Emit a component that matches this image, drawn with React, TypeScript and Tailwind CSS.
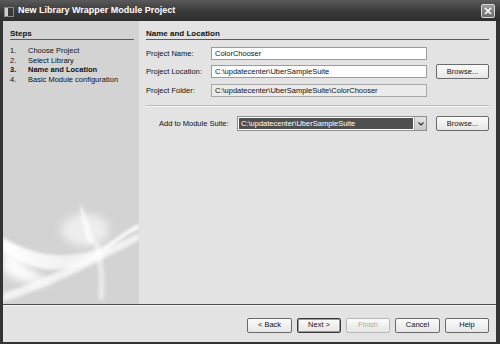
import React from 'react';

const steps = [
  { n: '1.', label: 'Choose Project' },
  { n: '2.', label: 'Select Library' },
  { n: '3.', label: 'Name and Location', current: true },
  { n: '4.', label: 'Basic Module configuration' },
];

function Button({ label, width, primary, disabled }: { label: string; width: string; primary?: boolean; disabled?: boolean }) {
  let cls = 'border-[#6a6a6a] text-[#111]';
  if (primary) cls = 'border-[#3a3a3a] shadow-[inset_0_0_0_1px_#9a9a9a] text-[#111]';
  if (disabled) cls = 'border-[#b9b9b9] text-[#a8a8a8]';
  return (
    <div
      className={`${width} h-[15px] flex items-center justify-center rounded-[2px] border bg-gradient-to-b from-[#fbfbfb] to-[#e6e6e6] text-[7.5px] ${cls}`}
    >
      {label}
    </div>
  );
}

function Swoosh() {
  return (
    <svg width="136" height="110" viewBox="0 0 136 110" className="mt-auto block">
      <defs>
        <filter id="soft" x="-20%" y="-20%" width="140%" height="140%">
          <feGaussianBlur stdDeviation="1.4" />
        </filter>
        <filter id="softer" x="-30%" y="-30%" width="160%" height="160%">
          <feGaussianBlur stdDeviation="4" />
        </filter>
        <linearGradient id="band" x1="0" y1="0" x2="1" y2="0">
          <stop offset="0" stopColor="#ffffff" stopOpacity="1" />
          <stop offset="0.45" stopColor="#ffffff" stopOpacity="0.7" />
          <stop offset="1" stopColor="#ffffff" stopOpacity="0.95" />
        </linearGradient>
      </defs>
      <ellipse cx="82" cy="36" rx="24" ry="16" fill="#ffffff" opacity="0.6" filter="url(#softer)" />
      <path d="M77 8 C82 22 88 35 92 48 L85 50 C81 36 77 22 77 8 Z" fill="#ffffff" opacity="0.7" filter="url(#soft)" />
      <path
        d="M0 44 C25 58 55 68 92 56 C108 50 122 36 136 30 L136 35 C120 41 108 55 94 65 C60 83 25 77 0 57 Z"
        fill="url(#band)"
        filter="url(#soft)"
      />
      <path d="M0 50 C15 64 30 80 48 88 C30 92 12 86 0 78 Z" fill="#ffffff" opacity="0.95" filter="url(#softer)" />
      <path
        d="M0 99 C40 87 90 61 136 39 L136 46 C92 70 45 94 0 108 Z"
        fill="#ffffff"
        opacity="0.7"
        filter="url(#soft)"
      />
      <path d="M90 50 C95 66 97 84 95 106 L101 106 C103 84 100 64 96 48 Z" fill="#ffffff" opacity="0.5" filter="url(#soft)" />
    </svg>
  );
}

export default function App() {
  return (
    <div className="w-[500px] h-[344px] bg-[#343434] flex flex-col font-['Liberation_Sans',Arial,sans-serif] text-[#111] overflow-hidden">
      {/* title bar */}
      <div className="h-[21px] flex items-center bg-gradient-to-b from-[#5a5a5a] via-[#3c3c3c] to-[#2e2e2e] pl-[4px] pr-[5px]">
        <svg width="11" height="11" viewBox="0 0 11 11" className="mt-[1px]">
          <rect x="0.5" y="1.5" width="9" height="9" fill="#1e1e1e" stroke="#8a8a8a" />
          <rect x="1" y="2" width="3" height="8" fill="#cfcfcf" />
          <rect x="4" y="2" width="5" height="8" fill="#3a3a3a" />
        </svg>
        <div className="ml-[3px] text-white font-bold text-[9px] leading-none">New Library Wrapper Module Project</div>
        <div className="ml-auto mt-[1px] w-[14px] h-[14px] rounded-[2px] border border-[#d8d8d8] bg-gradient-to-b from-[#9a9a9a] to-[#6e6e6e] flex items-center justify-center">
          <svg width="8" height="8" viewBox="0 0 8 8">
            <path d="M1 1 L7 7 M7 1 L1 7" stroke="#ffffff" strokeWidth="1.6" />
          </svg>
        </div>
      </div>

      {/* body */}
      <div className="flex-1 flex flex-col pl-[3px] pr-[4px] pb-[2px]">
        <div className="h-[284px] flex border-b border-[#4e4e4e]">
          {/* steps panel */}
          <div className="w-[136px] bg-[#d3d3d3] flex flex-col">
            <div className="mx-[7px] mr-[5px] pt-[7.5px] border-b border-[#5a5a5a]">
              <div className="font-bold text-[8px] leading-[10px]">Steps</div>
            </div>
            <div className="mt-[6.5px] ml-[7px] text-[7.5px] leading-[9.6px]">
              {steps.map((s) => (
                <div key={s.n} className={`flex ${s.current ? 'font-bold' : ''}`}>
                  <div className="w-[18px]">{s.n}</div>
                  <div>{s.label}</div>
                </div>
              ))}
            </div>
            <Swoosh />
          </div>

          {/* content */}
          <div className="flex-1 bg-[#e3e3e3] px-[7px] flex flex-col">
            <div className="pt-[7.5px] border-b border-[#5a5a5a]">
              <div className="font-bold text-[8px] leading-[10px]">Name and Location</div>
            </div>

            <div className="mt-[4.5px] flex flex-col text-[7.5px]">
              <div className="h-[18.5px] flex items-center">
                <div className="w-[65px]">Project Name:</div>
                <div className="w-[216px] h-[13px] bg-white border border-[#9c9c9c] flex items-center pl-[3px]">ColorChooser</div>
              </div>
              <div className="h-[18.5px] flex items-center">
                <div className="w-[65px]">Project Location:</div>
                <div className="w-[216px] h-[13px] bg-white border border-[#9c9c9c] flex items-center pl-[3px]">C:\updatecenter\UberSampleSuite</div>
                <div className="ml-[9px]">
                  <Button label="Browse..." width="w-[53px]" />
                </div>
              </div>
              <div className="h-[18.5px] flex items-center">
                <div className="w-[65px]">Project Folder:</div>
                <div className="w-[216px] h-[13px] bg-[#ebebeb] border border-[#a8a8a8] flex items-center pl-[3px]">
                  C:\updatecenter\UberSampleSuite\ColorChooser
                </div>
              </div>
            </div>

            <div className="mt-[5.5px] h-[1px] bg-[#bcbcbc] shadow-[0_1px_0_#f6f6f6]" />

            <div className="mt-[9.5px] h-[16px] flex items-center text-[7.5px] pl-[13px]">
              <div className="w-[78px]">Add to Module Suite:</div>
              <div className="w-[190px] h-[15px] flex border border-[#8e8e8e] bg-white">
                <div className="flex-1 m-[1px] bg-[#4f4f4f] text-white flex items-center pl-[2px]">
                  C:\updatecenter\UberSampleSuite
                </div>
                <div className="w-[12px] bg-gradient-to-b from-[#e4e4e4] to-[#c8c8c8] border-l border-[#b0b0b0] flex items-center justify-center">
                  <svg width="6" height="4" viewBox="0 0 6 4">
                    <path d="M0.5 0.5 L3 3 L5.5 0.5" stroke="#333" strokeWidth="1.2" fill="none" />
                  </svg>
                </div>
              </div>
              <div className="ml-[9px]">
                <Button label="Browse..." width="w-[53px]" />
              </div>
            </div>
          </div>
        </div>

        {/* footer */}
        <div className="flex-1 bg-[#e3e3e3] border-t border-[#f4f4f4] flex items-start justify-end pr-[7px] pt-[11.5px] gap-[5px]">
          <Button label="< Back" width="w-[45px]" />
          <Button label="Next >" width="w-[44px]" primary />
          <Button label="Finish" width="w-[44px]" disabled />
          <Button label="Cancel" width="w-[45px]" />
          <Button label="Help" width="w-[44px]" />
        </div>
      </div>
    </div>
  );
}
